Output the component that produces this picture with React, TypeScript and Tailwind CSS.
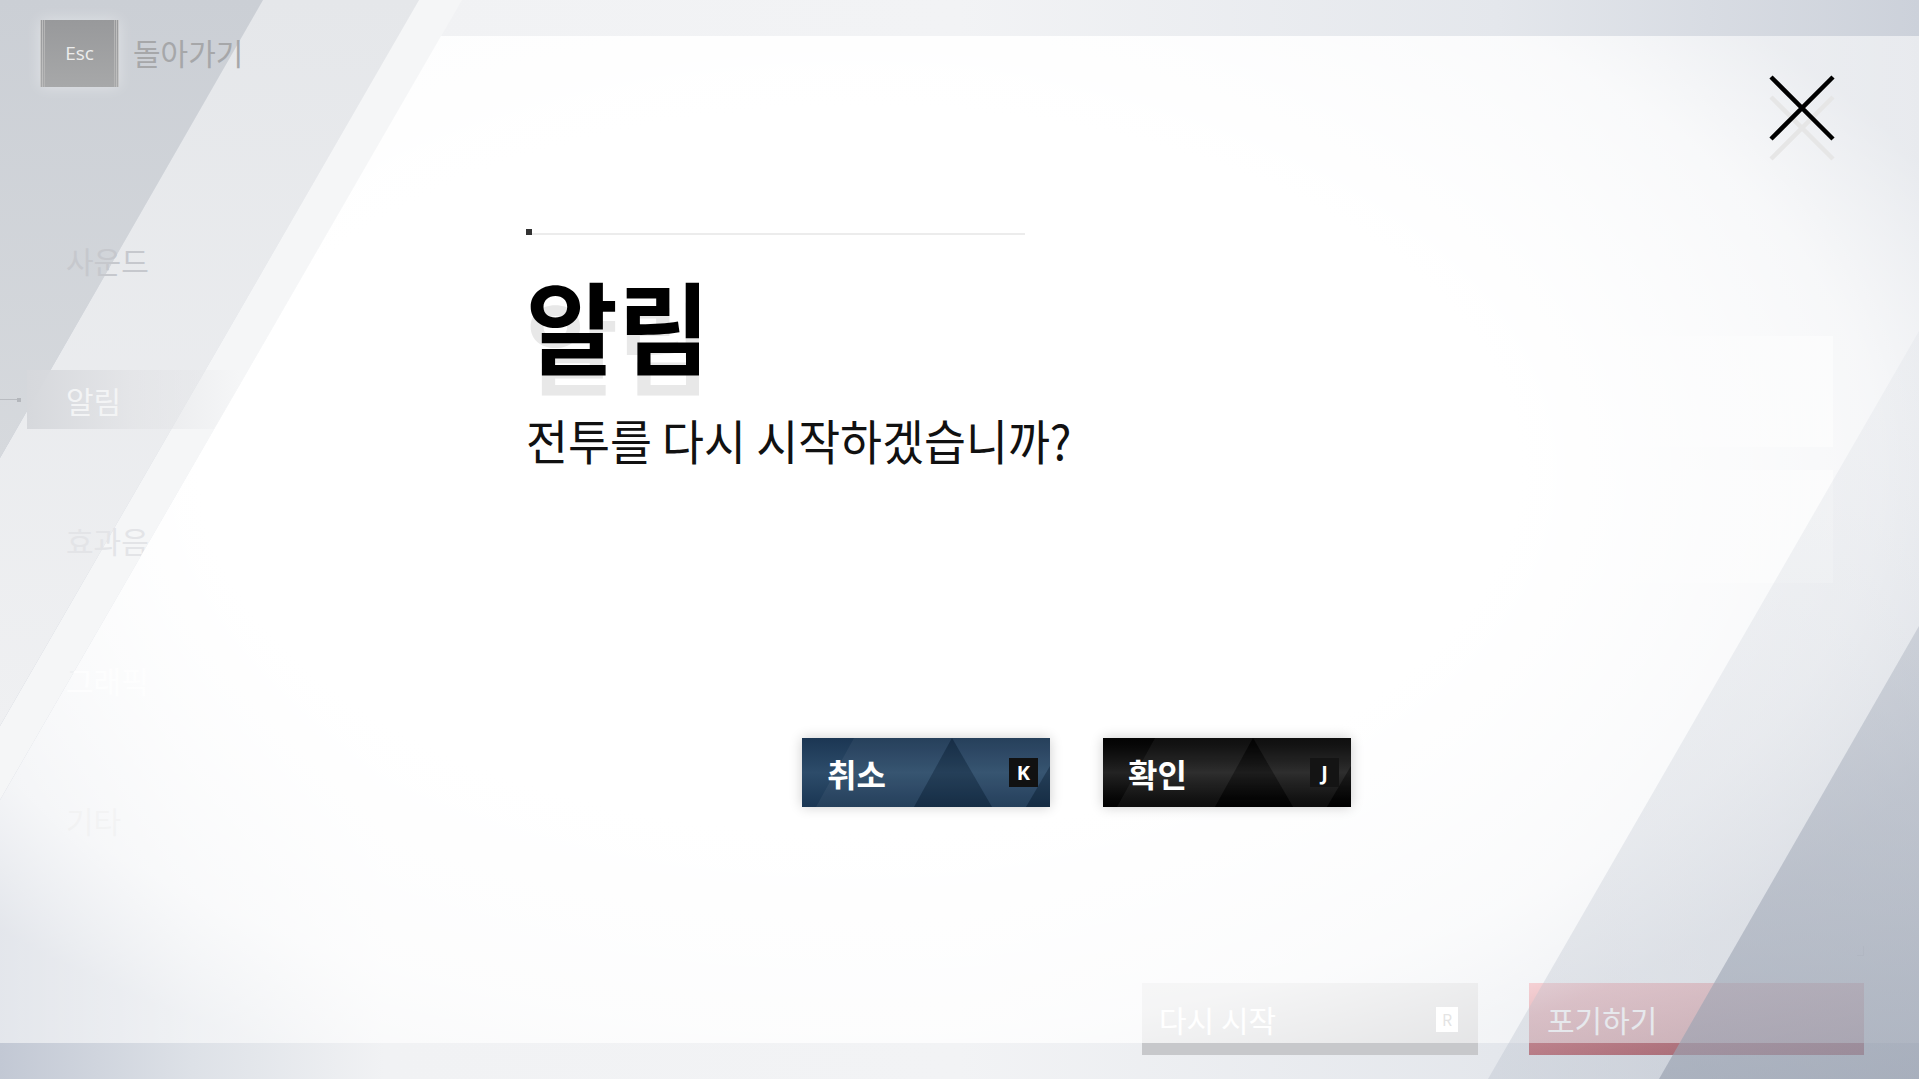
import type { ReactNode } from "react";

// Diagonal background art of the settings screen (slope follows a -30deg skew)
function BackdropArt() {
  return (
    <svg className="absolute inset-0" width="1919" height="1079" viewBox="0 0 1919 1079">
      <defs>
        <linearGradient id="base" x1="0" y1="0" x2="1" y2="0">
          <stop offset="0" stopColor="#c2c8d4" />
          <stop offset="0.1" stopColor="#dde1e7" />
          <stop offset="0.2" stopColor="#f1f2f4" />
          <stop offset="0.5" stopColor="#f2f3f5" />
          <stop offset="0.78" stopColor="#e4e7ec" />
          <stop offset="1" stopColor="#ccd1da" />
        </linearGradient>
        <linearGradient id="bandA" x1="0" y1="0" x2="0" y2="1">
          <stop offset="0" stopColor="#cbcfd5" />
          <stop offset="1" stopColor="#d6d9dd" />
        </linearGradient>
        <linearGradient id="bandB" x1="0" y1="0" x2="0" y2="1">
          <stop offset="0" stopColor="#e5e7ea" />
          <stop offset="1" stopColor="#eff0f2" />
        </linearGradient>
      </defs>
      <rect width="1919" height="1079" fill="url(#base)" />
      <polygon points="419,0 462,0 0,800 0,726" fill="#f5f6f7" />
      <polygon points="263,0 419,0 0,726 0,458" fill="url(#bandB)" />
      <polygon points="0,0 263,0 0,458" fill="url(#bandA)" />
    </svg>
  );
}

// White haze of the modal plus the right-hand bands laid over it
function ModalHaze() {
  return (
    <svg className="pointer-events-none absolute inset-0 z-20" width="1919" height="1079" viewBox="0 0 1919 1079">
      <defs>
        <radialGradient
          id="haze"
          gradientUnits="userSpaceOnUse"
          cx="0"
          cy="0"
          r="1"
          gradientTransform="translate(860 470) scale(1200 660)"
        >
          <stop offset="0" stopColor="#fff" stopOpacity="1" />
          <stop offset="0.55" stopColor="#fff" stopOpacity="1" />
          <stop offset="0.85" stopColor="#fff" stopOpacity="0.82" />
          <stop offset="1" stopColor="#fff" stopOpacity="0.55" />
        </radialGradient>
        <linearGradient id="bandC" x1="0" y1="0" x2="0" y2="1">
          <stop offset="0" stopColor="#c9ced7" stopOpacity="0.15" />
          <stop offset="1" stopColor="#b9c0cc" stopOpacity="0.38" />
        </linearGradient>
        <linearGradient id="bandD" x1="0" y1="0" x2="0" y2="1">
          <stop offset="0" stopColor="#a9b0bd" stopOpacity="0.42" />
          <stop offset="1" stopColor="#9aa2b1" stopOpacity="0.68" />
        </linearGradient>
      </defs>
      <polygon points="441,36 1919,36 1919,1043 0,1043 0,800" fill="url(#haze)" />
      <polygon points="1919,331 1919,1079 1488,1079" fill="url(#bandC)" />
      <polygon points="1919,626 1919,1079 1659,1079" fill="url(#bandD)" />
    </svg>
  );
}

function EscKey() {
  return (
    <div className="flex h-[67px] w-[79px] bg-gradient-to-b from-[#98999b] to-[#a7a8a9] shadow-[0_0_14px_rgba(255,255,255,0.4)]">
      <span className="w-px bg-[#c6c6c6]" />
      <span className="ml-px w-px bg-[#bdbdbd]" />
      <span className="ml-px w-px bg-[#b5b5b5]" />
      <span className="flex flex-1 items-center justify-center font-['Open_Sans',sans-serif] text-[19px] text-[#ececec]">
        Esc
      </span>
      <span className="w-px bg-[#b5b5b5]" />
      <span className="ml-px w-px bg-[#bdbdbd]" />
      <span className="ml-px w-px bg-[#c6c6c6]" />
    </div>
  );
}

const NAV = [
  { label: "사운드", tone: "text-[#c6c8cd]" },
  { label: "알림", tone: "text-[#f3f4f5]" },
  { label: "효과음", tone: "text-[#e3e4e7]" },
  { label: "그래픽", tone: "text-[#eef0f2]" },
  { label: "기타", tone: "text-[#b3b6bb]" },
];

function SideNav() {
  return (
    <nav className="mt-[143px] flex w-[260px] flex-col gap-[81px]">
      {NAV.map((item, i) => {
        const active = i === 1;
        return (
          <div key={item.label} className="flex h-[59px] items-center">
            <div className="flex w-[27px] items-center">
              {active && (
                <>
                  <span className="h-px w-[17px] bg-[#b9bcc1]" />
                  <span className="h-[4px] w-[4px] bg-[#b4b7bc]" />
                </>
              )}
            </div>
            <div
              className={`flex h-full w-[213px] items-center pl-[39px] text-[30px] leading-none ${item.tone} ${
                active ? "bg-gradient-to-r from-[#d6d8dc] via-[#e2e3e6]/70 to-transparent" : ""
              }`}
            >
              {item.label}
            </div>
          </div>
        );
      })}
    </nav>
  );
}

function GhostButton({ children, className }: { children: ReactNode; className: string }) {
  return <div className={`flex h-[72px] items-center text-[30px] leading-none text-white ${className}`}>{children}</div>;
}

function SettingsPage() {
  return (
    <div className="relative z-10 flex h-full flex-col">
      <header className="flex h-[87px] items-start gap-[14px] pl-[40px] pt-[20px]">
        <EscKey />
        <span className="mt-[17px] text-[30px] leading-none text-[#a6a7a9]">돌아가기</span>
      </header>
      <div className="flex flex-1">
        <SideNav />
        <section className="flex flex-1 flex-col">
          <div className="mt-[37px] flex h-[59px] items-center pl-[248px]">
            <span className="text-[23px] leading-none text-[#e9eaec]">스킬 커맨드</span>
            <div className="ml-[138px] flex h-full w-[337px] items-center justify-center bg-[#f0f1f3] text-[26px] leading-none text-[#e2e3e6]">
              상태 초기화 하기
            </div>
          </div>
          <div className="mt-[153px] flex flex-col items-end gap-[23px] pr-[86px]">
            <div className="h-[111px] w-[254px] bg-gradient-to-r from-transparent to-[#e9ebee]" />
            <div className="h-[113px] w-[254px] bg-gradient-to-r from-transparent to-[#e9ebee]" />
          </div>
          <div className="flex-1" />
          <div className="flex justify-end pr-[55px]">
            <span className="h-[10px] w-[7px] border-b border-r border-[#a9adb4]" />
          </div>
          <div className="mt-[27px] flex justify-end gap-[51px] pb-[24px] pr-[55px]">
            <GhostButton className="w-[336px] bg-[#c7c8cb] pl-[17px] pr-[20px]">
              <span>다시 시작</span>
              <span className="ml-auto flex h-[25px] w-[22px] items-center justify-center bg-white text-[16px] text-[#b9b9b9]">
                R
              </span>
            </GhostButton>
            <GhostButton className="w-[335px] bg-gradient-to-br from-[#e3838d] to-[#8a2431] pl-[18px]">
              <span>포기하기</span>
            </GhostButton>
          </div>
        </section>
      </div>
    </div>
  );
}

function ButtonFacets() {
  return (
    <svg className="absolute inset-0" width="248" height="69" viewBox="0 0 248 69">
      <polygon points="52,0 150,0 112,69 14,69" fill="#fff" fillOpacity="0.05" />
      <polygon points="150,0 190,69 112,69" fill="#000" fillOpacity="0.16" />
      <polygon points="150,0 248,0 248,28 224,69 190,69" fill="#fff" fillOpacity="0.05" />
      <polygon points="248,28 248,69 224,69" fill="#000" fillOpacity="0.18" />
    </svg>
  );
}

function DialogButton({ label, hotkey, tone }: { label: string; hotkey: string; tone: "navy" | "black" }) {
  const skin =
    tone === "navy"
      ? "bg-gradient-to-b from-[#1b3653] via-[#2d4c6a] to-[#1a3653]"
      : "bg-gradient-to-b from-[#030303] via-[#232323] to-[#020202]";
  const keyBg = tone === "navy" ? "bg-[#111]" : "bg-[#141414]";
  return (
    <button
      type="button"
      className={`relative flex h-[69px] w-[248px] items-center pl-[25px] pr-[12px] shadow-[0_0_12px_rgba(0,0,0,0.2)] ${skin}`}
    >
      <ButtonFacets />
      <span className="relative text-[32px] font-bold leading-none text-white">{label}</span>
      <span
        className={`relative ml-auto flex h-[29px] w-[29px] items-center justify-center font-['Noto_Sans',sans-serif] text-[20px] font-bold text-white ${keyBg}`}
      >
        {hotkey}
      </span>
    </button>
  );
}

function CloseIcon() {
  return (
    <svg width="66" height="86" viewBox="0 0 66 86" fill="none">
      <path d="M2 22 L64 84 M64 22 L2 84" stroke="#e6e6e6" strokeWidth="4.5" />
      <path d="M2 2 L64 64 M64 2 L2 64" stroke="#000" strokeWidth="4.5" />
    </svg>
  );
}

function RestartDialog() {
  return (
    <div className="absolute inset-x-0 bottom-[36px] top-[36px] z-30 flex flex-col pl-[526px] pt-[193px]">
      <button type="button" className="absolute right-[84px] top-[39px]">
        <CloseIcon />
      </button>
      <div className="flex items-end">
        <span className="h-[6px] w-[6px] bg-[#333]" />
        <span className="h-[2px] w-[493px] bg-[#ececec]" />
      </div>
      <h1 className="mt-[39px] text-[100px] font-bold leading-none text-black [text-shadow:0_20px_0_#e8e8e8]">
        알림
      </h1>
      <p className="mt-[41px] origin-left scale-x-[0.95] whitespace-nowrap text-[48px] leading-none text-[#111]">
        전투를 다시 시작하겠습니까?
      </p>
      <div className="ml-[276px] mt-[275px] flex gap-[53px]">
        <DialogButton label="취소" hotkey="K" tone="navy" />
        <DialogButton label="확인" hotkey="J" tone="black" />
      </div>
    </div>
  );
}

export default function App() {
  return (
    <div className="relative h-[1079px] w-[1919px] overflow-hidden font-['Noto_Sans_CJK_KR','Noto_Sans',sans-serif]">
      <BackdropArt />
      <SettingsPage />
      <ModalHaze />
      <RestartDialog />
    </div>
  );
}
